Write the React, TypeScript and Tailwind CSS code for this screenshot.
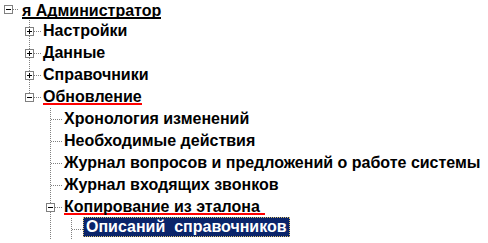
import React from "react";

type Guide = "none" | "full" | "top";

interface TreeRow {
  label: string;
  level: number;
  own: Guide;
  box?: "plus" | "minus";
  mark?: "red" | "black";
  selected?: boolean;
  guides?: boolean[];
}

const rows: TreeRow[] = [
  { label: "я Администратор", level: 0, own: "none", box: "minus", mark: "black" },
  { label: "Настройки", level: 1, own: "full", box: "plus" },
  { label: "Данные", level: 1, own: "full", box: "plus" },
  { label: "Справочники", level: 1, own: "full", box: "plus" },
  { label: "Обновление", level: 1, own: "top", box: "minus", mark: "red" },
  { label: "Хронология изменений", level: 2, own: "full" },
  { label: "Необходимые действия", level: 2, own: "full" },
  { label: "Журнал вопросов и предложений о работе системы", level: 2, own: "full" },
  { label: "Журнал входящих звонков", level: 2, own: "full" },
  { label: "Копирование из эталона", level: 2, own: "full", box: "minus", mark: "red" },
  { label: "Описаний  справочников", level: 3, own: "full", selected: true, guides: [false, false, true] },
];

const dot = { stroke: "#808080", strokeDasharray: "1 1" };

// one 21x22 gutter cell of the tree: guide lines, connector and the +/- box
function Cell({ vertical, connector, box, root }: { vertical: Guide; connector?: boolean; box?: "plus" | "minus"; root?: boolean }) {
  return (
    <svg width="21" height="22" viewBox="0 0 21 22" shapeRendering="crispEdges" className="shrink-0">
      {vertical === "full" && <line x1="8.5" y1="0" x2="8.5" y2="22" {...dot} />}
      {vertical === "top" && <line x1="8.5" y1="0" x2="8.5" y2="11" {...dot} />}
      {connector && (root ? <line x1="13" y1="11.5" x2="19" y2="11.5" {...dot} /> : <line x1="9" y1="11.5" x2="20" y2="11.5" {...dot} />)}
      {box && (
        <g>
          <rect x="4.5" y="7.5" width="8" height="8" fill="#fff" stroke="#808080" />
          <line x1="6" y1="11.5" x2="11" y2="11.5" stroke="#000" />
          {box === "plus" && <line x1="8.5" y1="9" x2="8.5" y2="14" stroke="#000" />}
        </g>
      )}
    </svg>
  );
}

export default function App() {
  return (
    <div className="h-[243px] w-[488px] overflow-hidden bg-white font-['Liberation_Sans',Arial,sans-serif] text-[16px] font-bold text-black">
      <div className="-mt-[2px] flex flex-col">
        {rows.map((row, i) => {
          const guides = row.guides ?? Array.from({ length: row.level }, () => false);
          return (
            <div key={i} className="flex h-[22px] items-start whitespace-nowrap">
              {guides.map((g, k) => (
                <Cell key={k} vertical={g ? "full" : "none"} />
              ))}
              <Cell vertical={row.own} connector box={row.box} root={row.level === 0} />
              {row.selected ? (
                <span className="-ml-[1px] -mt-[1px] h-[20px] whitespace-pre border border-dotted border-[#d8c070] bg-[#0a246a] px-[2px] leading-[18px] text-white">
                  {row.label}
                </span>
              ) : row.mark === "black" ? (
                <span className="ml-[1px] border-b-2 border-black pt-[6px] leading-[13px]">{row.label}</span>
              ) : row.mark === "red" ? (
                <span className={i === 9 ? "ml-[1px] border-b-2 border-[#ff0000] pr-[5px] pt-[4px] leading-[13px]" : "ml-[1px] border-b-2 border-[#ff0000] pt-[4px] leading-[13px]"}>
                  {row.label}
                </span>
              ) : (
                <span className="ml-[1px] leading-[22px]">{row.label}</span>
              )}
            </div>
          );
        })}
      </div>
    </div>
  );
}
